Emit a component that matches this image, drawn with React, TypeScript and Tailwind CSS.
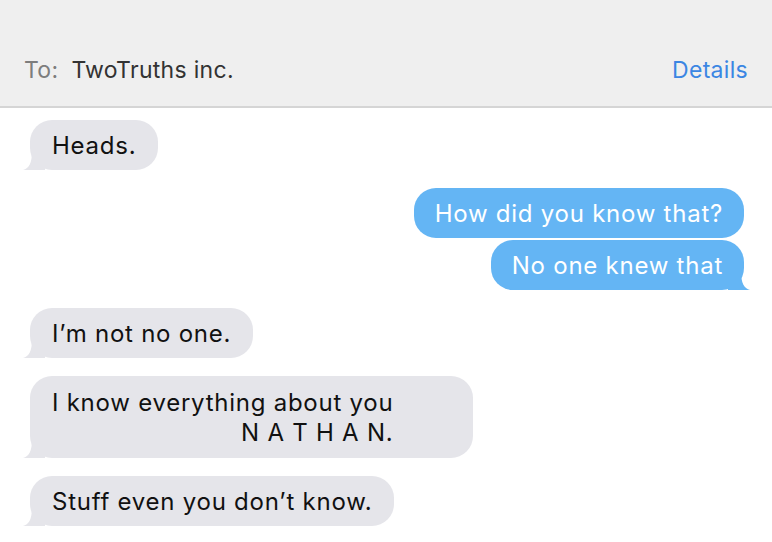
import React from "react";

const font = { fontFamily: "Inter, 'Noto Sans', sans-serif" };

function TailLeft({ color }: { color: string }) {
  return (
    <svg className="absolute left-[-9px] bottom-0" width="24" height="20" viewBox="0 0 24 20">
      <path d="M24 0 L24 20 L2 20 C8 18 11 14 11 0 Z" fill={color} />
    </svg>
  );
}

function TailRight({ color }: { color: string }) {
  return (
    <svg className="absolute right-[-8px] bottom-0" width="24" height="20" viewBox="0 0 24 20">
      <path d="M0 0 L0 20 L22 20 C16 18 13 14 13 0 Z" fill={color} />
    </svg>
  );
}

function Left({ children, tail = true, className = "" }: { children: React.ReactNode; tail?: boolean; className?: string }) {
  return (
    <div className="flex justify-start">
      <div className={`relative bg-[#e5e5ea] text-[#111] rounded-[22px] px-[22px] pt-[11px] pb-[9px] text-[24px] leading-[30px] tracking-[0.75px] ${className}`}>
        {tail && <TailLeft color="#e5e5ea" />}
        <div className="relative">{children}</div>
      </div>
    </div>
  );
}

function Right({ children, tail = false }: { children: React.ReactNode; tail?: boolean }) {
  return (
    <div className="flex justify-end">
      <div className="relative bg-[#64b5f4] text-white rounded-[22px] px-[21px] pt-[11px] pb-[9px] text-[24px] leading-[30px] tracking-[0.75px]">
        {tail && <TailRight color="#64b5f4" />}
        <div className="relative">{children}</div>
      </div>
    </div>
  );
}

export default function App() {
  return (
    <div className="w-[772px] h-[542px] bg-white overflow-hidden" style={font}>
      <div className="h-[108px] bg-[#efefef] border-b-2 border-[#d5d5d5] flex items-end justify-between px-[24px] pb-[21px]">
        <div className="text-[23px] leading-[30px] tracking-[0.3px]">
          <span className="text-[#7d7d7d]">To:</span>
          <span className="text-[#333] ml-[13px]">TwoTruths inc.</span>
        </div>
        <div className="text-[23px] leading-[30px] tracking-[0.3px] text-[#3b86e3]">Details</div>
      </div>
      <div className="flex flex-col pl-[30px] pr-[28px] pt-[12px]">
        <Left>Heads.</Left>
        <div className="h-[18px]" />
        <Right>How did you know that?</Right>
        <div className="h-[2px]" />
        <Right tail>No one knew that</Right>
        <div className="h-[18px]" />
        <Left>I’m not no one.</Left>
        <div className="h-[18px]" />
        <Left className="w-[443px] pt-[12px] pb-[10px]">
          <div className="inline-block leading-[30px]">
            <div>I know everything about you</div>
            <div className="text-right whitespace-pre">N A T H A N.</div>
          </div>
        </Left>
        <div className="h-[18px]" />
        <Left>Stuff even you don’t know.</Left>
      </div>
    </div>
  );
}
